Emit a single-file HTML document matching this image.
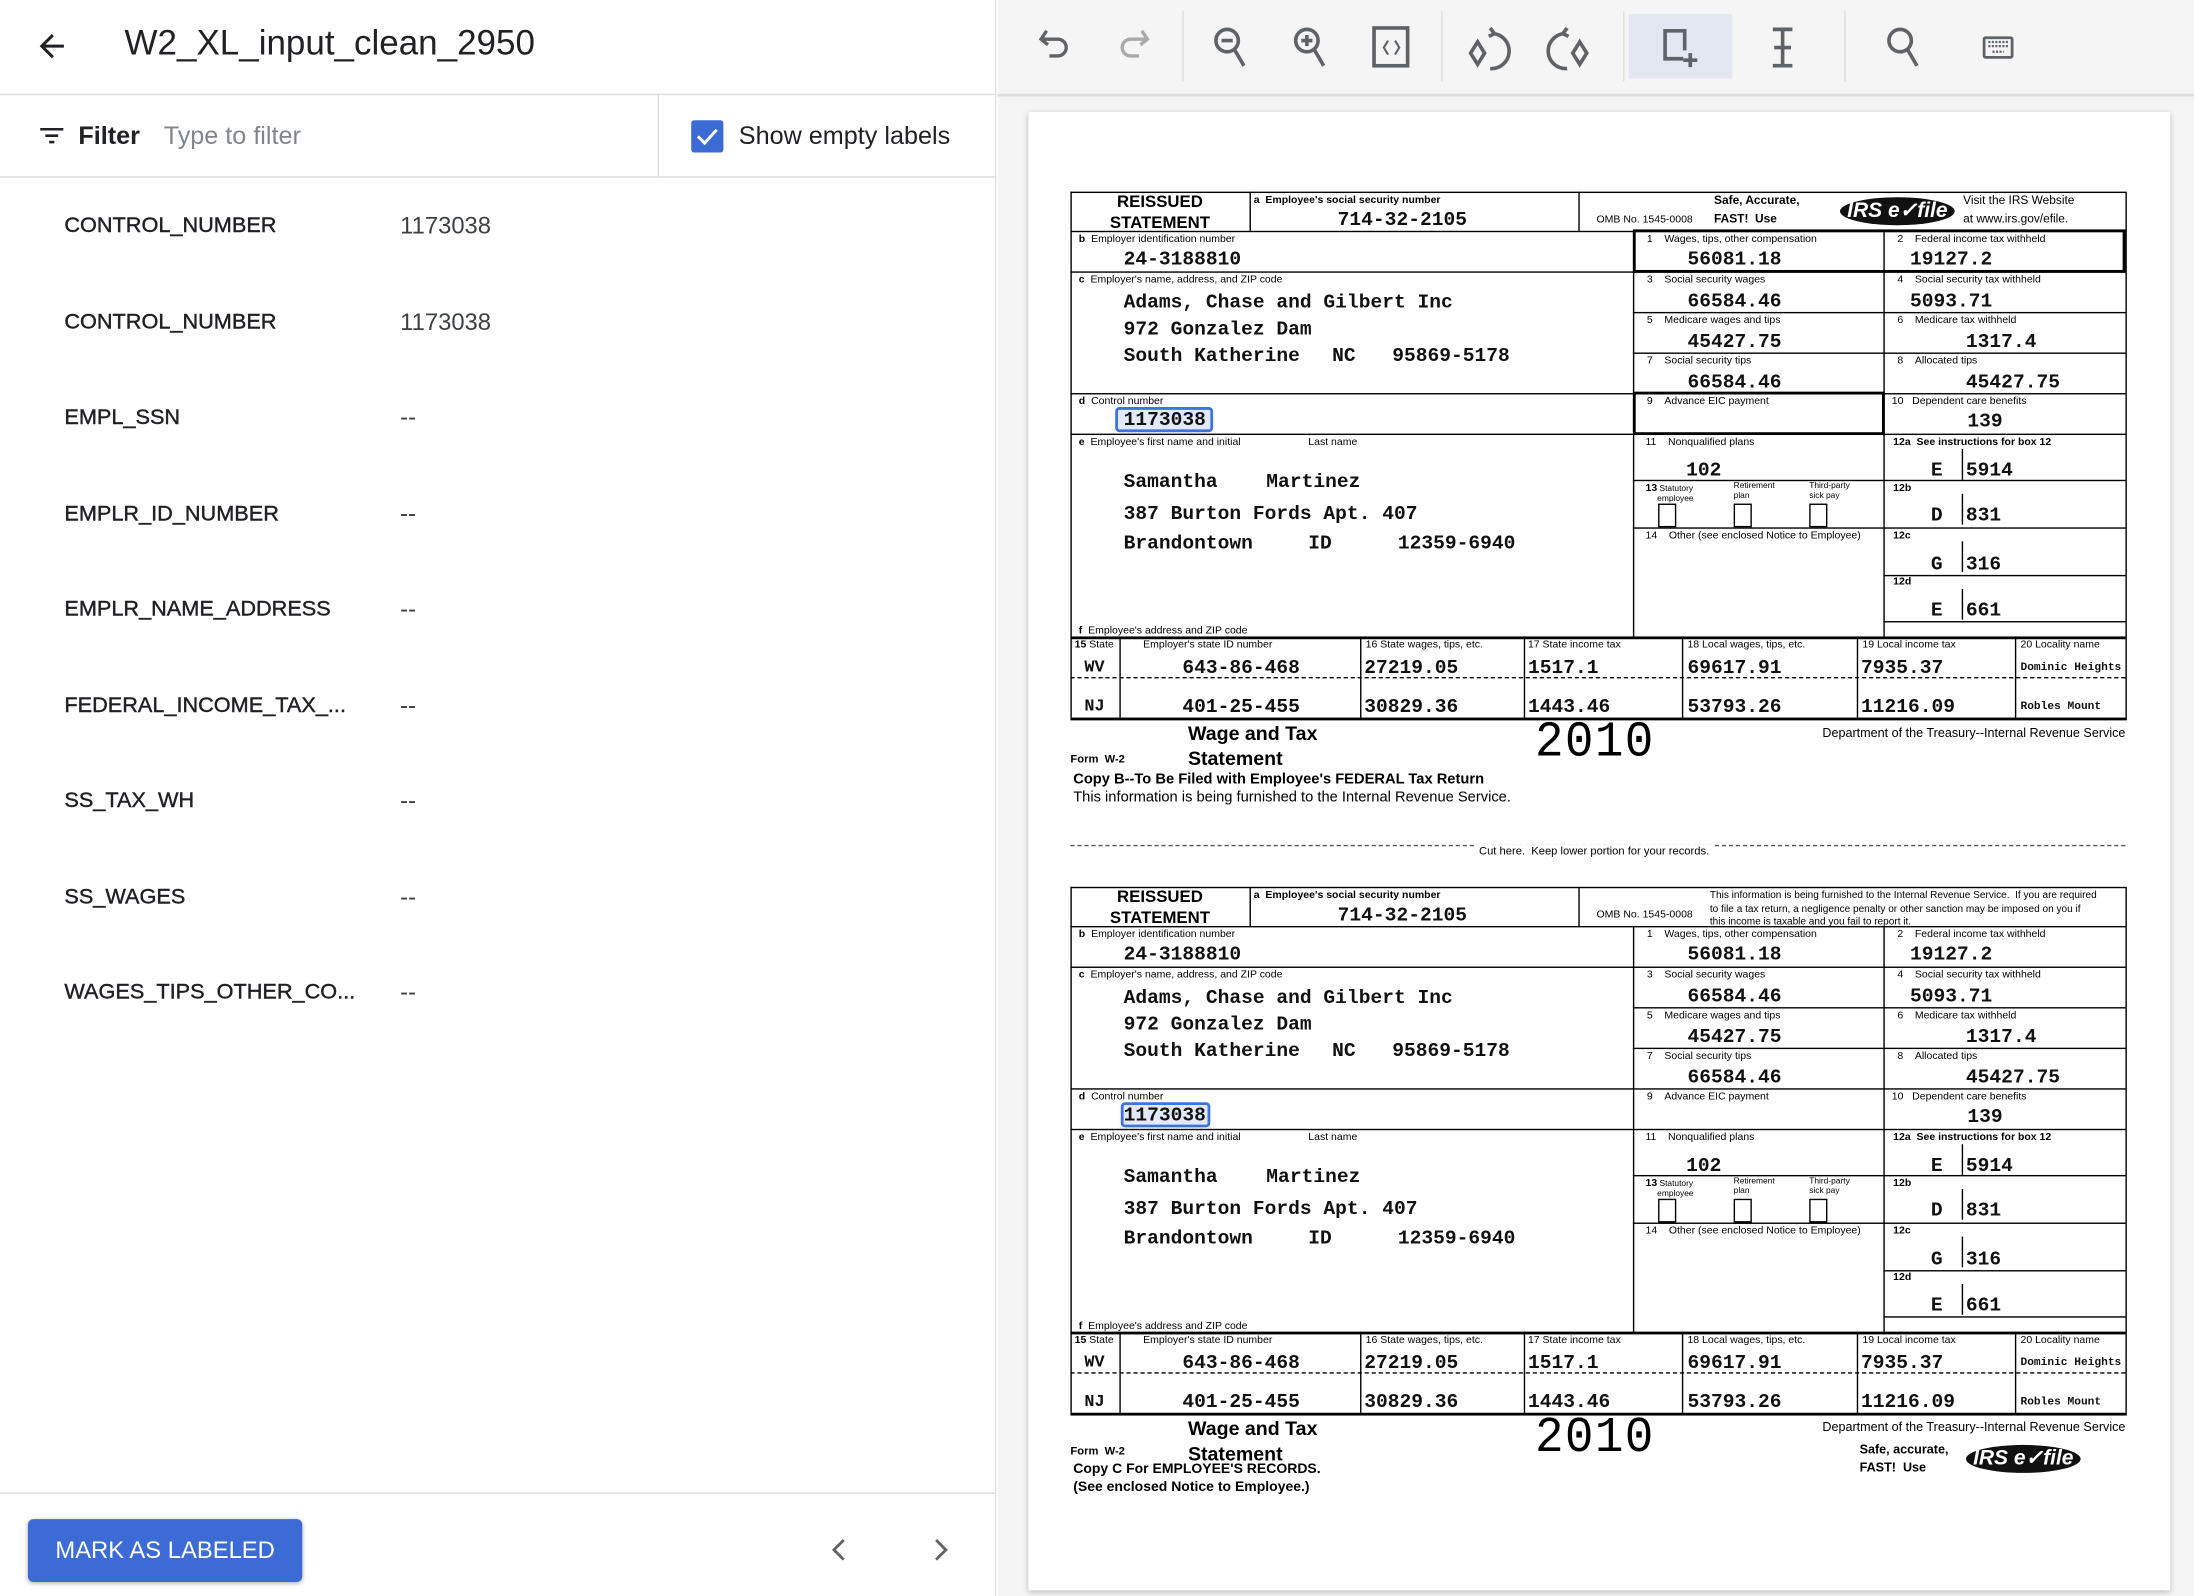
<!DOCTYPE html>
<html><head><meta charset="utf-8"><style>
*{margin:0;padding:0;box-sizing:border-box}
html,body{width:2194px;height:1596px;overflow:hidden;background:#fff}
#s{position:absolute;left:0;top:0;width:1568px;height:1141px;transform:scale(1.39923,1.39877);transform-origin:0 0;font-family:"Liberation Sans",sans-serif}
.a{position:absolute;white-space:nowrap}
.lab{position:absolute;left:46px;font-size:15.5px;color:#202124;-webkit-text-stroke:0.3px #202124}
.val{position:absolute;left:286px;font-size:17px;color:#3c4043}
.f{position:absolute;width:754px;height:440px;left:765px}
.f div{position:absolute;white-space:nowrap}
.h{height:0;border-top:1px solid #000}
.v{width:0;border-left:1px solid #000}
.l{font-family:"Liberation Sans Narrow","Liberation Sans",sans-serif;font-size:7.5px;color:#000;line-height:1}
.m{font-family:"Liberation Mono",monospace;font-weight:bold;font-size:14px;line-height:1;color:#111}
.b{font-weight:bold}
.ef{background:#111;color:#fff;border-radius:50%;font:italic bold 15px "Liberation Sans",sans-serif;text-align:center;line-height:20px}
.sep{position:absolute;top:8px;width:1px;height:50px;background:#ddd}
.ic{position:absolute;top:18px}
.yr{font-family:'Liberation Mono',monospace;font-size:34px;letter-spacing:1px;line-height:1;transform:scaleY(1.05);transform-origin:0 0}
</style></head><body><div id="s">
<div class="a" style="left:0;top:0;width:712px;height:1141px;background:#fff;border-right:1px solid #e0e0e0"></div>
<svg class="a" style="left:24px;top:20px" width="26" height="26" viewBox="0 0 24 24"><path d="M20 11H7.8l5.6-5.6L12 4l-8 8 8 8 1.4-1.4L7.8 13H20z" fill="#202124"/></svg>
<div class="a" style="left:89px;top:17px;font-size:25px;color:#202124">W2_XL_input_clean_2950</div>
<div class="a" style="left:0;top:67px;width:712px;height:1px;background:#ddd"></div>
<svg class="a" style="left:26px;top:86px" width="22" height="22" viewBox="0 0 24 24"><path d="M3 6h18v2H3zm4 5h10v2H7zm3 5h4v2h-4z" fill="#202124"/></svg>
<div class="a" style="left:56px;top:87px;font-size:18px;font-weight:bold;color:#202124">Filter</div>
<div class="a" style="left:117px;top:87px;font-size:18px;color:#80868b">Type to filter</div>
<div class="a" style="left:470px;top:68px;width:1px;height:58px;background:#ddd"></div>
<div class="a" style="left:494px;top:86px;width:23px;height:23px;background:#3c6bd6;border-radius:2px"></div>
<svg class="a" style="left:494px;top:86px" width="23" height="23" viewBox="0 0 24 24"><path d="M5 12l5 5 9-10" stroke="#fff" stroke-width="2.2" fill="none"/></svg>
<div class="a" style="left:528px;top:87px;font-size:18px;color:#202124">Show empty labels</div>
<div class="a" style="left:0;top:126px;width:712px;height:1px;background:#ddd"></div>
<div class="lab" style="top:153px">CONTROL_NUMBER</div><div class="val" style="top:152px">1173038</div>
<div class="lab" style="top:222px">CONTROL_NUMBER</div><div class="val" style="top:221px">1173038</div>
<div class="lab" style="top:290px">EMPL_SSN</div><div class="val" style="top:289px">--</div>
<div class="lab" style="top:359px">EMPLR_ID_NUMBER</div><div class="val" style="top:358px">--</div>
<div class="lab" style="top:427px">EMPLR_NAME_ADDRESS</div><div class="val" style="top:426px">--</div>
<div class="lab" style="top:496px">FEDERAL_INCOME_TAX_...</div><div class="val" style="top:495px">--</div>
<div class="lab" style="top:564px">SS_TAX_WH</div><div class="val" style="top:563px">--</div>
<div class="lab" style="top:633px">SS_WAGES</div><div class="val" style="top:632px">--</div>
<div class="lab" style="top:701px">WAGES_TIPS_OTHER_CO...</div><div class="val" style="top:700px">--</div>
<div class="a" style="left:0;top:1067px;width:712px;height:1px;background:#ddd"></div>
<div class="a" style="left:20px;top:1086px;width:196px;height:45px;background:#3c6bd6;border-radius:4px;color:#fff;font-size:17px;text-align:center;line-height:45px;box-shadow:0 1px 3px rgba(0,0,0,.3)">MARK AS LABELED</div>
<svg class="a" style="left:588px;top:1096px" width="24" height="24" viewBox="0 0 24 24"><path d="M15 5l-7 7 7 7" stroke="#5f6368" stroke-width="2" fill="none"/></svg>
<svg class="a" style="left:660px;top:1096px" width="24" height="24" viewBox="0 0 24 24"><path d="M9 5l7 7-7 7" stroke="#5f6368" stroke-width="2" fill="none"/></svg>
<div class="a" style="left:713px;top:0;width:855px;height:1141px;background:#f5f5f5"></div>
<div class="a" style="left:713px;top:67px;width:855px;height:2px;background:#ddd"></div>
<div class="a" style="left:1164px;top:10px;width:74px;height:46px;background:#e3e7f2"></div>
<div class="sep" style="left:845px"></div><div class="sep" style="left:1030px"></div><div class="sep" style="left:1160px"></div><div class="sep" style="left:1318px"></div>
<svg class="ic" style="left:740px" width="28" height="30" viewBox="0 0 28 30" fill="none" stroke="#5f6368" stroke-width="2.4"><path d="M8 4L4 10l5 4M4 10h12a6 6 0 010 12h-6"/></svg>
<svg class="ic" style="left:796px" width="28" height="30" viewBox="0 0 28 30" fill="none" stroke="#aaa" stroke-width="2.4"><path d="M20 4l4 6-5 4M24 10H12a6 6 0 000 12h6"/></svg>
<svg class="ic" style="left:866px" width="30" height="30" viewBox="0 0 30 30" fill="none" stroke="#5f6368" stroke-width="2.6"><circle cx="11" cy="11" r="8"/><path d="M16 17l7 12M7 11h8"/></svg>
<svg class="ic" style="left:923px" width="30" height="30" viewBox="0 0 30 30" fill="none" stroke="#5f6368" stroke-width="2.6"><circle cx="11" cy="11" r="8"/><path d="M16 17l7 12M7 11h8M11 7v8"/></svg>
<svg class="ic" style="left:980px" width="30" height="32" viewBox="0 0 30 32" fill="none" stroke="#5f6368" stroke-width="2.6"><rect x="2" y="2" width="24" height="27"/><path d="M12 11l-3 5 3 5M17 11l3 5-3 5" stroke-width="1.5"/></svg>
<svg class="ic" style="left:1048px" width="32" height="34" viewBox="0 0 32 34" fill="none" stroke="#5f6368" stroke-width="2.6"><path d="M8 12l-5 8 5 8 5-8z"/><path d="M17 2l3 4-4 2M19 6a11 11 0 01-2 25"/></svg>
<svg class="ic" style="left:1105px" width="32" height="34" viewBox="0 0 32 34" fill="none" stroke="#5f6368" stroke-width="2.6"><path d="M24 12l-5 8 5 8 5-8z"/><path d="M15 2l-3 4 4 2M13 6a11 11 0 002 25"/></svg>
<svg class="ic" style="left:1187px" width="30" height="32" viewBox="0 0 30 32" fill="none" stroke="#5f6368" stroke-width="2.6"><path d="M16 24H3V4h14v14"/><path d="M21 20v10M16 25h10"/></svg>
<svg class="ic" style="left:1262px" width="24" height="32" viewBox="0 0 24 32" fill="none" stroke="#5f6368" stroke-width="2.6"><path d="M5 3h14M5 29h14M12 3v26M6 16h12"/></svg>
<svg class="ic" style="left:1347px" width="30" height="32" viewBox="0 0 30 32" fill="none" stroke="#5f6368" stroke-width="2.6"><circle cx="11" cy="11" r="8"/><path d="M16 17l7 12"/></svg>
<svg class="ic" style="left:1416px" width="24" height="32" viewBox="0 0 24 32"><rect x="2" y="9" width="20" height="14" rx="1" fill="none" stroke="#5f6368" stroke-width="2"/><path d="M5 12h14M5 15h14M8 19h8" stroke="#5f6368" stroke-width="1.6" stroke-dasharray="1.5 1"/></svg>
<div class="a" style="left:735px;top:80px;width:816px;height:1057px;background:#fff;box-shadow:0 1px 4px rgba(0,0,0,.25)"></div>

<!-- COPY B -->
<div class="f" style="top:137px">
<div class="h" style="left:0;top:0;width:754px"></div>
<div class="v" style="left:0;top:0;height:376px"></div><div class="v" style="left:754px;top:0;height:376px"></div>
<div class="v" style="left:128px;top:0;height:28px"></div><div class="v" style="left:363px;top:0;height:28px"></div>
<div class="h" style="left:0;top:28px;width:754px"></div>
<div class="h" style="left:0;top:57px;width:754px"></div>
<div class="h" style="left:402px;top:86px;width:352px"></div>
<div class="h" style="left:402px;top:115px;width:352px"></div>
<div class="h" style="left:0;top:144px;width:754px"></div>
<div class="h" style="left:0;top:173px;width:754px"></div>
<div class="h" style="left:402px;top:206px;width:352px"></div>
<div class="h" style="left:402px;top:240px;width:352px"></div>
<div class="h" style="left:581px;top:274px;width:173px"></div>
<div class="h" style="left:581px;top:307px;width:173px"></div>
<div class="v" style="left:402px;top:28px;height:290px"></div><div class="v" style="left:581px;top:28px;height:290px"></div>
<div style="left:402px;top:27px;width:352px;height:31px;border:2px solid #000"></div>
<div style="left:402px;top:143px;width:180px;height:31px;border:2px solid #000"></div>
<div class="v" style="left:637px;top:184px;height:22px"></div><div class="v" style="left:637px;top:216px;height:22px"></div><div class="v" style="left:637px;top:250px;height:22px"></div><div class="v" style="left:637px;top:284px;height:22px"></div>
<div class="h" style="left:0;top:318px;width:754px;border-top-width:2px"></div>
<div class="v" style="left:35px;top:318px;height:58px"></div><div class="v" style="left:207px;top:318px;height:58px"></div><div class="v" style="left:324px;top:318px;height:58px"></div><div class="v" style="left:437px;top:318px;height:58px"></div><div class="v" style="left:562px;top:318px;height:58px"></div><div class="v" style="left:675px;top:318px;height:58px"></div>
<div class="h" style="left:0;top:347px;width:754px;border-top:1px dashed #000"></div>
<div class="h" style="left:0;top:376px;width:755px;border-top-width:2px"></div>

<div class="b" style="left:0;top:0;width:128px;text-align:center;font-size:12px;line-height:15px">REISSUED<br>STATEMENT</div>
<div class="l b" style="left:131px;top:2px">a &nbsp;Employee's social security number</div>
<div class="m" style="left:191px;top:14px">714-32-2105</div>
<div class="l" style="left:376px;top:16px">OMB No. 1545-0008</div>
<div class="b" style="left:460px;top:0px;font-size:8.5px;line-height:13px">Safe, Accurate,<br>FAST! &nbsp;Use</div>
<div class="ef" style="left:550px;top:4px;width:82px;height:20px">IRS e✓file</div>
<div style="left:638px;top:0px;font-size:8.5px;line-height:13px">Visit the IRS Website<br>at www.irs.gov/efile.</div>
<div class="l" style="left:6px;top:30px"><b>b</b> &nbsp;Employer identification number</div>
<div class="m" style="left:38px;top:42px">24-3188810</div>
<div class="l" style="left:6px;top:59px"><b>c</b> &nbsp;Employer's name, address, and ZIP code</div>
<div class="m" style="left:38px;top:73px">Adams, Chase and Gilbert Inc</div>
<div class="m" style="left:38px;top:92px">972 Gonzalez Dam</div>
<div class="m" style="left:38px;top:111px">South Katherine</div><div class="m" style="left:187px;top:111px">NC</div><div class="m" style="left:230px;top:111px">95869-5178</div>
<div class="l" style="left:412px;top:30px">1 &nbsp;&nbsp;&nbsp;Wages, tips, other compensation</div><div class="m" style="left:441px;top:42px">56081.18</div>
<div class="l" style="left:591px;top:30px">2 &nbsp;&nbsp;&nbsp;Federal income tax withheld</div><div class="m" style="left:600px;top:42px">19127.2</div>
<div class="l" style="left:412px;top:59px">3 &nbsp;&nbsp;&nbsp;Social security wages</div><div class="m" style="left:441px;top:72px">66584.46</div>
<div class="l" style="left:591px;top:59px">4 &nbsp;&nbsp;&nbsp;Social security tax withheld</div><div class="m" style="left:600px;top:72px">5093.71</div>
<div class="l" style="left:412px;top:88px">5 &nbsp;&nbsp;&nbsp;Medicare wages and tips</div><div class="m" style="left:441px;top:101px">45427.75</div>
<div class="l" style="left:591px;top:88px">6 &nbsp;&nbsp;&nbsp;Medicare tax withheld</div><div class="m" style="left:640px;top:101px">1317.4</div>
<div class="l" style="left:412px;top:117px">7 &nbsp;&nbsp;&nbsp;Social security tips</div><div class="m" style="left:441px;top:130px">66584.46</div>
<div class="l" style="left:591px;top:117px">8 &nbsp;&nbsp;&nbsp;Allocated tips</div><div class="m" style="left:640px;top:130px">45427.75</div>
<div class="l" style="left:6px;top:146px"><b>d</b> &nbsp;Control number</div>
<div style="left:32px;top:154px;width:70px;height:18px;border:2px solid #3b73e0;border-radius:3px;background:rgba(59,115,224,.15)"></div>
<div class="m" style="left:38px;top:157px">1173038</div>
<div class="l" style="left:412px;top:146px">9 &nbsp;&nbsp;&nbsp;Advance EIC payment</div>
<div class="l" style="left:587px;top:146px">10 &nbsp;&nbsp;Dependent care benefits</div><div class="m" style="left:641px;top:158px">139</div>
<div class="l" style="left:6px;top:175px"><b>e</b> &nbsp;Employee's first name and initial</div><div class="l" style="left:170px;top:175px">Last name</div>
<div class="m" style="left:38px;top:201px">Samantha</div><div class="m" style="left:140px;top:201px">Martinez</div>
<div class="m" style="left:38px;top:224px">387 Burton Fords Apt. 407</div>
<div class="m" style="left:38px;top:245px">Brandontown</div><div class="m" style="left:170px;top:245px">ID</div><div class="m" style="left:234px;top:245px">12359-6940</div>
<div class="l" style="left:411px;top:175px">11 &nbsp;&nbsp;&nbsp;Nonqualified plans</div><div class="m" style="left:440px;top:193px">102</div>
<div class="l b" style="left:588px;top:175px">12a &nbsp;See instructions for box 12</div><div class="m" style="left:615px;top:193px">E</div><div class="m" style="left:640px;top:193px">5914</div>
<div class="l" style="left:411px;top:208px;font-size:6px;line-height:7px"><b style="font-size:7.5px">13</b> Statutory<br>&nbsp;&nbsp;&nbsp;&nbsp;&nbsp;employee</div>
<div class="l" style="left:474px;top:208px;font-size:6px;line-height:7px">Retirement<br>plan</div>
<div class="l" style="left:528px;top:208px;font-size:6px;line-height:7px">Third-party<br>sick pay</div>
<div style="left:420px;top:223px;width:13px;height:17px;border:1px solid #000"></div>
<div style="left:474px;top:223px;width:13px;height:17px;border:1px solid #000"></div>
<div style="left:528px;top:223px;width:13px;height:17px;border:1px solid #000"></div>
<div class="l" style="left:588px;top:208px"><b>12b</b></div><div class="m" style="left:615px;top:225px">D</div><div class="m" style="left:640px;top:225px">831</div>
<div class="l" style="left:411px;top:242px">14 &nbsp;&nbsp;&nbsp;Other (see enclosed Notice to Employee)</div>
<div class="l" style="left:588px;top:242px"><b>12c</b></div><div class="m" style="left:615px;top:260px">G</div><div class="m" style="left:640px;top:260px">316</div>
<div class="l" style="left:588px;top:275px"><b>12d</b></div><div class="m" style="left:615px;top:293px">E</div><div class="m" style="left:640px;top:293px">661</div>
<div class="l" style="left:6px;top:310px"><b>f</b> &nbsp;Employee's address and ZIP code</div>
<div class="l" style="left:3px;top:320px"><b>15</b> State</div>
<div class="l" style="left:52px;top:320px">Employer's state ID number</div>
<div class="l" style="left:211px;top:320px">16 State wages, tips, etc.</div>
<div class="l" style="left:327px;top:320px">17 State income tax</div>
<div class="l" style="left:441px;top:320px">18 Local wages, tips, etc.</div>
<div class="l" style="left:566px;top:320px">19 Local income tax</div>
<div class="l" style="left:679px;top:320px">20 Locality name</div>
<div class="m" style="left:10px;top:334px;font-size:12px">WV</div><div class="m" style="left:80px;top:334px">643-86-468</div><div class="m" style="left:210px;top:334px">27219.05</div><div class="m" style="left:327px;top:334px">1517.1</div><div class="m" style="left:441px;top:334px">69617.91</div><div class="m" style="left:565px;top:334px">7935.37</div><div class="m" style="left:679px;top:337px;font-size:8px">Dominic Heights</div>
<div class="m" style="left:10px;top:362px;font-size:12px">NJ</div><div class="m" style="left:80px;top:362px">401-25-455</div><div class="m" style="left:210px;top:362px">30829.36</div><div class="m" style="left:327px;top:362px">1443.46</div><div class="m" style="left:441px;top:362px">53793.26</div><div class="m" style="left:565px;top:362px">11216.09</div><div class="m" style="left:679px;top:365px;font-size:8px">Robles Mount</div>
<div class="b" style="left:84px;top:378px;font-size:14px;line-height:18px">Wage and Tax<br>Statement</div>
<div class="b" style="left:0;top:401px;font-size:8px">Form &nbsp;W-2</div>
<div class="yr" style="left:332px;top:377px">2010</div>
<div style="left:480px;top:382px;width:274px;text-align:right;font-size:9px">Department of the Treasury--Internal Revenue Service</div>
<div class="b" style="left:2px;top:414px;font-size:10.5px">Copy B--To Be Filed with Employee's FEDERAL Tax Return</div>
<div style="left:2px;top:427px;font-size:10.5px">This information is being furnished to the Internal Revenue Service.</div>
<div class="h" style="left:0;top:467px;width:754px;border-top:1px dashed #555"></div>
<div style="left:290px;top:467px;font-size:8px;background:#fff;padding:0 2px">Cut here. &nbsp;Keep lower portion for your records.</div>
</div>

<!-- COPY C -->
<div class="f" style="top:634px">
<div class="h" style="left:0;top:0;width:754px"></div>
<div class="v" style="left:0;top:0;height:376px"></div><div class="v" style="left:754px;top:0;height:376px"></div>
<div class="v" style="left:128px;top:0;height:28px"></div><div class="v" style="left:363px;top:0;height:28px"></div>
<div class="h" style="left:0;top:28px;width:754px"></div>
<div class="h" style="left:0;top:57px;width:754px"></div>
<div class="h" style="left:402px;top:86px;width:352px"></div>
<div class="h" style="left:402px;top:115px;width:352px"></div>
<div class="h" style="left:0;top:144px;width:754px"></div>
<div class="h" style="left:0;top:173px;width:754px"></div>
<div class="h" style="left:402px;top:206px;width:352px"></div>
<div class="h" style="left:402px;top:240px;width:352px"></div>
<div class="h" style="left:581px;top:274px;width:173px"></div>
<div class="h" style="left:581px;top:307px;width:173px"></div>
<div class="v" style="left:402px;top:28px;height:290px"></div><div class="v" style="left:581px;top:28px;height:290px"></div>
<div class="v" style="left:637px;top:184px;height:22px"></div><div class="v" style="left:637px;top:216px;height:22px"></div><div class="v" style="left:637px;top:250px;height:22px"></div><div class="v" style="left:637px;top:284px;height:22px"></div>
<div class="h" style="left:0;top:318px;width:754px;border-top-width:2px"></div>
<div class="v" style="left:35px;top:318px;height:58px"></div><div class="v" style="left:207px;top:318px;height:58px"></div><div class="v" style="left:324px;top:318px;height:58px"></div><div class="v" style="left:437px;top:318px;height:58px"></div><div class="v" style="left:562px;top:318px;height:58px"></div><div class="v" style="left:675px;top:318px;height:58px"></div>
<div class="h" style="left:0;top:347px;width:754px;border-top:1px dashed #000"></div>
<div class="h" style="left:0;top:376px;width:755px;border-top-width:2px"></div>

<div class="b" style="left:0;top:0;width:128px;text-align:center;font-size:12px;line-height:15px">REISSUED<br>STATEMENT</div>
<div class="l b" style="left:131px;top:2px">a &nbsp;Employee's social security number</div>
<div class="m" style="left:191px;top:14px">714-32-2105</div>
<div class="l" style="left:376px;top:16px">OMB No. 1545-0008</div>
<div class="l" style="left:457px;top:1px;font-size:7.2px;line-height:9.5px">This information is being furnished to the Internal Revenue Service. &nbsp;If you are required<br>to file a tax return, a negligence penalty or other sanction may be imposed on you if<br>this income is taxable and you fail to report it.</div>
<div class="l" style="left:6px;top:30px"><b>b</b> &nbsp;Employer identification number</div>
<div class="m" style="left:38px;top:42px">24-3188810</div>
<div class="l" style="left:6px;top:59px"><b>c</b> &nbsp;Employer's name, address, and ZIP code</div>
<div class="m" style="left:38px;top:73px">Adams, Chase and Gilbert Inc</div>
<div class="m" style="left:38px;top:92px">972 Gonzalez Dam</div>
<div class="m" style="left:38px;top:111px">South Katherine</div><div class="m" style="left:187px;top:111px">NC</div><div class="m" style="left:230px;top:111px">95869-5178</div>
<div class="l" style="left:412px;top:30px">1 &nbsp;&nbsp;&nbsp;Wages, tips, other compensation</div><div class="m" style="left:441px;top:42px">56081.18</div>
<div class="l" style="left:591px;top:30px">2 &nbsp;&nbsp;&nbsp;Federal income tax withheld</div><div class="m" style="left:600px;top:42px">19127.2</div>
<div class="l" style="left:412px;top:59px">3 &nbsp;&nbsp;&nbsp;Social security wages</div><div class="m" style="left:441px;top:72px">66584.46</div>
<div class="l" style="left:591px;top:59px">4 &nbsp;&nbsp;&nbsp;Social security tax withheld</div><div class="m" style="left:600px;top:72px">5093.71</div>
<div class="l" style="left:412px;top:88px">5 &nbsp;&nbsp;&nbsp;Medicare wages and tips</div><div class="m" style="left:441px;top:101px">45427.75</div>
<div class="l" style="left:591px;top:88px">6 &nbsp;&nbsp;&nbsp;Medicare tax withheld</div><div class="m" style="left:640px;top:101px">1317.4</div>
<div class="l" style="left:412px;top:117px">7 &nbsp;&nbsp;&nbsp;Social security tips</div><div class="m" style="left:441px;top:130px">66584.46</div>
<div class="l" style="left:591px;top:117px">8 &nbsp;&nbsp;&nbsp;Allocated tips</div><div class="m" style="left:640px;top:130px">45427.75</div>
<div class="l" style="left:6px;top:146px"><b>d</b> &nbsp;Control number</div>
<div style="left:36px;top:154px;width:64px;height:18px;border:2px solid #3b73e0;border-radius:3px;background:rgba(59,115,224,.15)"></div>
<div class="m" style="left:38px;top:157px">1173038</div>
<div class="l" style="left:412px;top:146px">9 &nbsp;&nbsp;&nbsp;Advance EIC payment</div>
<div class="l" style="left:587px;top:146px">10 &nbsp;&nbsp;Dependent care benefits</div><div class="m" style="left:641px;top:158px">139</div>
<div class="l" style="left:6px;top:175px"><b>e</b> &nbsp;Employee's first name and initial</div><div class="l" style="left:170px;top:175px">Last name</div>
<div class="m" style="left:38px;top:201px">Samantha</div><div class="m" style="left:140px;top:201px">Martinez</div>
<div class="m" style="left:38px;top:224px">387 Burton Fords Apt. 407</div>
<div class="m" style="left:38px;top:245px">Brandontown</div><div class="m" style="left:170px;top:245px">ID</div><div class="m" style="left:234px;top:245px">12359-6940</div>
<div class="l" style="left:411px;top:175px">11 &nbsp;&nbsp;&nbsp;Nonqualified plans</div><div class="m" style="left:440px;top:193px">102</div>
<div class="l b" style="left:588px;top:175px">12a &nbsp;See instructions for box 12</div><div class="m" style="left:615px;top:193px">E</div><div class="m" style="left:640px;top:193px">5914</div>
<div class="l" style="left:411px;top:208px;font-size:6px;line-height:7px"><b style="font-size:7.5px">13</b> Statutory<br>&nbsp;&nbsp;&nbsp;&nbsp;&nbsp;employee</div>
<div class="l" style="left:474px;top:208px;font-size:6px;line-height:7px">Retirement<br>plan</div>
<div class="l" style="left:528px;top:208px;font-size:6px;line-height:7px">Third-party<br>sick pay</div>
<div style="left:420px;top:223px;width:13px;height:17px;border:1px solid #000"></div>
<div style="left:474px;top:223px;width:13px;height:17px;border:1px solid #000"></div>
<div style="left:528px;top:223px;width:13px;height:17px;border:1px solid #000"></div>
<div class="l" style="left:588px;top:208px"><b>12b</b></div><div class="m" style="left:615px;top:225px">D</div><div class="m" style="left:640px;top:225px">831</div>
<div class="l" style="left:411px;top:242px">14 &nbsp;&nbsp;&nbsp;Other (see enclosed Notice to Employee)</div>
<div class="l" style="left:588px;top:242px"><b>12c</b></div><div class="m" style="left:615px;top:260px">G</div><div class="m" style="left:640px;top:260px">316</div>
<div class="l" style="left:588px;top:275px"><b>12d</b></div><div class="m" style="left:615px;top:293px">E</div><div class="m" style="left:640px;top:293px">661</div>
<div class="l" style="left:6px;top:310px"><b>f</b> &nbsp;Employee's address and ZIP code</div>
<div class="l" style="left:3px;top:320px"><b>15</b> State</div>
<div class="l" style="left:52px;top:320px">Employer's state ID number</div>
<div class="l" style="left:211px;top:320px">16 State wages, tips, etc.</div>
<div class="l" style="left:327px;top:320px">17 State income tax</div>
<div class="l" style="left:441px;top:320px">18 Local wages, tips, etc.</div>
<div class="l" style="left:566px;top:320px">19 Local income tax</div>
<div class="l" style="left:679px;top:320px">20 Locality name</div>
<div class="m" style="left:10px;top:334px;font-size:12px">WV</div><div class="m" style="left:80px;top:334px">643-86-468</div><div class="m" style="left:210px;top:334px">27219.05</div><div class="m" style="left:327px;top:334px">1517.1</div><div class="m" style="left:441px;top:334px">69617.91</div><div class="m" style="left:565px;top:334px">7935.37</div><div class="m" style="left:679px;top:337px;font-size:8px">Dominic Heights</div>
<div class="m" style="left:10px;top:362px;font-size:12px">NJ</div><div class="m" style="left:80px;top:362px">401-25-455</div><div class="m" style="left:210px;top:362px">30829.36</div><div class="m" style="left:327px;top:362px">1443.46</div><div class="m" style="left:441px;top:362px">53793.26</div><div class="m" style="left:565px;top:362px">11216.09</div><div class="m" style="left:679px;top:365px;font-size:8px">Robles Mount</div>
<div class="b" style="left:84px;top:378px;font-size:14px;line-height:18px">Wage and Tax<br>Statement</div>
<div class="b" style="left:0;top:399px;font-size:8px">Form &nbsp;W-2</div>
<div class="yr" style="left:332px;top:377px">2010</div>
<div style="left:480px;top:381px;width:274px;text-align:right;font-size:9px">Department of the Treasury--Internal Revenue Service</div>
<div class="b" style="left:564px;top:396px;font-size:9px;line-height:13px">Safe, accurate,<br>FAST! &nbsp;Use</div>
<div class="ef" style="left:640px;top:399px;width:82px;height:20px">IRS e✓file</div>
<div class="b" style="left:2px;top:411px;font-size:10px">Copy C For EMPLOYEE'S RECORDS.</div>
<div class="b" style="left:2px;top:424px;font-size:10px">(See enclosed Notice to Employee.)</div>
</div>
</div></body></html>
